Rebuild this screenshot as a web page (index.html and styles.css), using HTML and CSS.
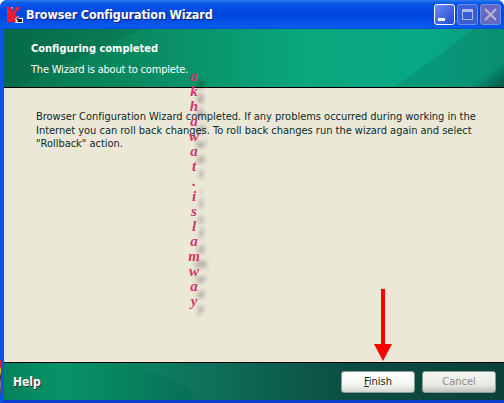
FILE: index.html
```html
<!DOCTYPE html>
<html lang="en">
  <head>
    <meta charset="UTF-8" />
    <title>Browser Configuration Wizard</title>
    <link rel="stylesheet" href="styles.css">
  </head>

  <body>
    <div class="window">
      <!-- Title bar -->
      <div class="titlebar">
        <svg class="app-icon" width="18" height="18" viewBox="0 0 18 18">
          <path d="M1 1h4l1 5 5-5h4L9 8l5 5-2 3H1z" fill="#ee1c34" />
          <path d="M5 1h2v3z" fill="#f7a0a8" />
          <path d="M9 13l3-3 1 2h4v5H9l1-2z" fill="#fff" />
          <path d="M10 13l2-2 1 2h3v3h-5l1-2z" fill="#1a1a1a" />
        </svg>
        <span class="title">Browser Configuration Wizard</span>
        <div class="window-buttons">
          <div class="win-btn active">
            <svg width="21" height="21" viewBox="0 0 21 21"><path d="M4 14h7v3H4z" fill="#fff" /></svg>
          </div>
          <div class="win-btn">
            <svg width="21" height="21" viewBox="0 0 21 21"><path d="M5.500 5.500h10v10h-10z" fill="none" stroke="#a9bdf0" /><path d="M5 5h11v3H5z" fill="#a9bdf0" /></svg>
          </div>
          <div class="win-btn close">
            <svg width="21" height="21" viewBox="0 0 21 21"><path d="M5 5l11 11M16 5L5 16" stroke="#b3b0d8" stroke-width="2.400" fill="none" /></svg>
          </div>
        </div>
      </div>

      <!-- Header -->
      <div class="header">
        <h1>Configuring completed</h1>
        <p>The Wizard is about to complete.</p>
      </div>

      <!-- Content -->
      <div class="content">
        <p>Browser Configuration Wizard completed. If any problems occurred during working in the Internet you can roll back changes. To roll back changes run the wizard again and select "Rollback" action.</p>
      </div>

      <!-- Footer -->
      <div class="footer">
        <span class="help">Help</span>
        <div class="footer-buttons">
          <button class="btn"><u>F</u>inish</button>
          <button class="btn disabled">Cancel</button>
        </div>
      </div>
    </div>

    <!-- Stuff pasted over the screenshot -->
    <div class="watermark">
      <span>a</span><span>k</span><span>h</span><span>a</span><span>w</span><span>a</span><span>t</span><span>.</span><span>i</span><span>s</span><span>l</span><span>a</span><span>m</span><span>w</span><span>a</span><span>y</span>
    </div>
    <div class="red-arrow">
      <div class="arrow-shaft"></div>
      <div class="arrow-head"></div>
    </div>
    <div class="desktop-strip"></div>
  </body>
</html>
```

FILE: styles.css
```css
:root {
  --blue: #0a50dc;
  --beige: #ebe8d8;
  --text-color: #0c2a26;
}

* {
  box-sizing: border-box;
  margin: 0;
  padding: 0;
}

body {
  width: 504px;
  height: 403px;
  overflow: hidden;
  position: relative;
  background-color: #fff;
  font-family: "DejaVu Sans Condensed", "DejaVu Sans", sans-serif;
}

.window {
  display: flex;
  flex-direction: column;
  height: 403px;
  background-color: var(--blue);
  border-radius: 7px 7px 0 0;
  border-left: 4px solid #0a55e4;
  border-bottom: 3px solid #0a3fd0;
}

/* Title bar */
.titlebar {
  display: flex;
  align-items: center;
  height: 29px;
  flex-shrink: 0;
  margin-left: -4px;
  padding: 0 3px 0 6px;
  border-radius: 7px 7px 0 0;
  background: linear-gradient(to bottom, #2f7cf0 0, #0a5ae8 3px, #0450e6 6px, #0046dc 14px, #0650e4 22px, #0a5cf0 27px, #0a4cd8 29px);
}

.app-icon {
  margin-right: 2px;
  flex-shrink: 0;
}

.title {
  flex: 1;
  color: #fff;
  font-weight: 700;
  font-size: 12.500px;
  letter-spacing: -0.150px;
  text-shadow: 1px 1px 0 #0f1f70;
}

.window-buttons {
  display: flex;
  gap: 2px;
}

.win-btn {
  width: 21px;
  height: 21px;
  border-radius: 3px;
  border: 1px solid #6f90e8;
  background: linear-gradient(135deg, #3a62d8, #3a5ad0);
  overflow: hidden;
}

.win-btn svg {
  display: block;
  margin: -1px;
}

.win-btn.active {
  border-color: #fff;
  background: linear-gradient(135deg, #6a8cf0, #2348d0);
}

.win-btn.close {
  background: #6468c0;
}

/* Header */
.header {
  height: 59px;
  flex-shrink: 0;
  padding: 13px 27px 0;
  border-bottom: 1px solid #000;
  color: #fff;
  font-size: 11px;
  background:
    linear-gradient(141deg, transparent 94%, rgba(0, 50, 40, 0.6) 100%),
    linear-gradient(144deg, rgba(0, 60, 50, 0) 81%, rgba(0, 60, 50, 0.14) 81.300%),
    linear-gradient(155deg, rgba(0, 60, 40, 0.15) 22%, rgba(0, 60, 40, 0) 22.300%),
    linear-gradient(90deg, #07724e 0, #09885f 120px, #0aa67c 300px, #07a885 420px, #0a9c7c 100%);
}

.header h1 {
  font-size: 11px;
  font-weight: 700;
  margin-bottom: 8px;
}

.header p {
  letter-spacing: -0.200px;
}

/* Content */
.content {
  flex: 1;
  padding: 22px 24px 0 32px;
  background-color: var(--beige);
  color: var(--text-color);
  font-size: 11px;
  line-height: 13.500px;
}

.content p {
  letter-spacing: -0.020px;
}

/* Footer */
.footer {
  display: flex;
  align-items: center;
  justify-content: space-between;
  height: 38px;
  flex-shrink: 0;
  padding: 0 8px 0 9px;
  border-top: 1px solid #000;
  background:
    radial-gradient(ellipse 190px 46px at 0 100%, rgba(255, 255, 255, 0) 99%, rgba(255, 255, 255, 0.03) 100%),
    linear-gradient(90deg, #05825c 0, #079468 60px, #07855f 110px, #066f58 190px, #04483e 340px, #033a34 100%);
}

.help {
  color: #fff;
  font-size: 12px;
  font-weight: 700;
  text-shadow: 1px 1px 0 #333;
}

.footer-buttons {
  display: flex;
  gap: 7px;
}

.btn {
  width: 74px;
  height: 22px;
  border: 1px solid #8a9a94;
  border-radius: 3px;
  font-family: inherit;
  font-size: 11px;
  color: #222;
  background: linear-gradient(to bottom, #fff 0, #f6f6f2 60%, #d8d8d2 100%);
}

.btn.disabled {
  color: #8c8c88;
  background: linear-gradient(to bottom, #f4f4f0 0, #e8e8e4 65%, #c0c0bc 100%);
}

/* Watermark letters */
.watermark {
  position: absolute;
  left: 184px;
  top: 69px;
  width: 20px;
  display: flex;
  flex-direction: column;
  align-items: center;
  color: #d2346a;
  font-family: "Liberation Serif", serif;
  font-style: italic;
  font-weight: 700;
  font-size: 15px;
  line-height: 15px;
  text-shadow: 7px 7px 4px rgba(0, 0, 0, 0.4);
}

/* Red arrow */
.red-arrow {
  position: absolute;
  left: 373px;
  top: 289px;
  width: 19px;
  display: flex;
  flex-direction: column;
  align-items: center;
}

.arrow-shaft {
  width: 4px;
  height: 55px;
  background-color: #f00;
}

.arrow-head {
  width: 0;
  height: 0;
  border-left: 9.500px solid transparent;
  border-right: 9.500px solid transparent;
  border-top: 17px solid #f00;
}

.desktop-strip {
  position: absolute;
  left: 0;
  top: 360px;
  width: 1px;
  height: 34px;
  background: linear-gradient(to bottom, #d22 0, #d22 20%, #ee0 30%, #223 50%, #88a 70%, #333 100%);
}
```
